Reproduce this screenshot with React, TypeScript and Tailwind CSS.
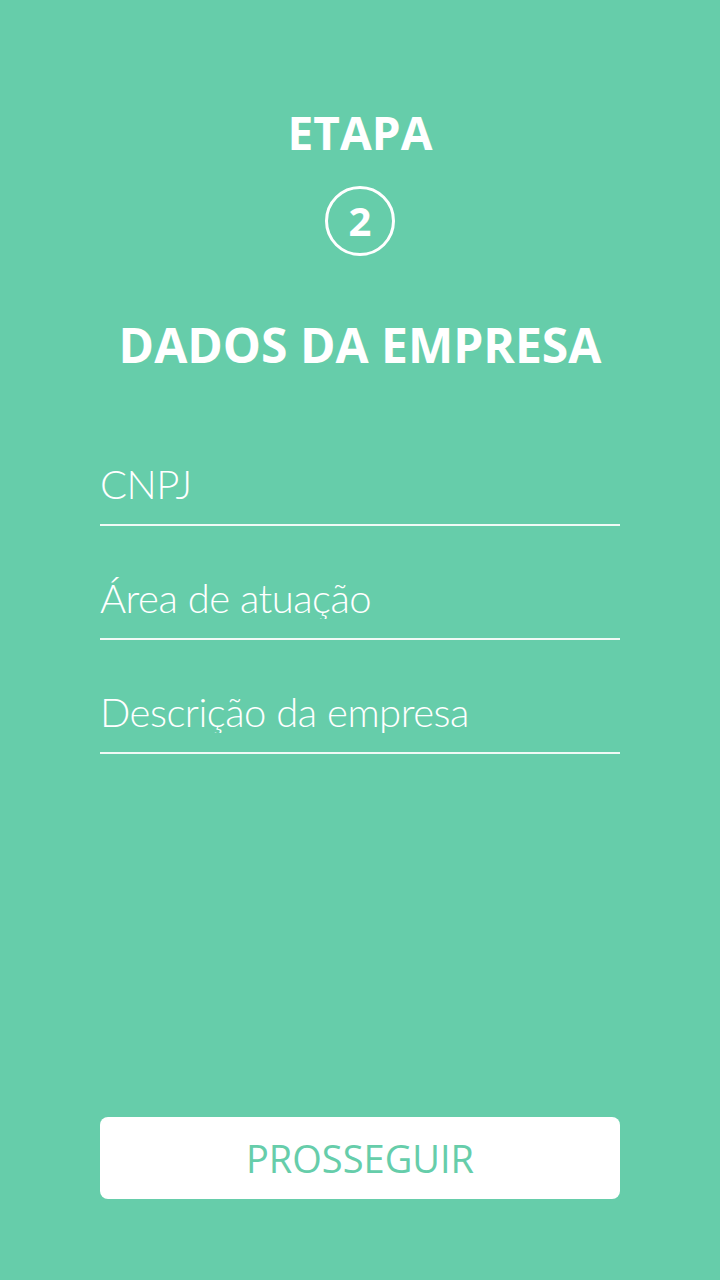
import { useState } from 'react';

const fields = [
  { name: 'cnpj', label: 'CNPJ' },
  { name: 'area', label: 'Área de atuação' },
  { name: 'descricao', label: 'Descrição da empresa' },
];

const App = () => {
  const [values, setValues] = useState<Record<string, string>>({});

  return (
    <div
      className="h-[1280px] w-full bg-[#66CDAA] flex flex-col items-center text-white"
      style={{ fontFamily: '"Open Sans", "Noto Sans", sans-serif' }}
    >
      <div className="mt-[109px] text-[46px] leading-none font-bold">ETAPA</div>

      <div className="mt-[31px] w-[70px] h-[70px] rounded-full border-[3px] border-white flex items-center justify-center">
        <span className="text-[40px] leading-none font-bold">2</span>
      </div>

      <h1 className="mt-[65px] text-[48px] leading-none font-bold">DADOS DA EMPRESA</h1>

      <div className="mt-[43px] w-[520px] flex flex-col">
        {fields.map((field) => (
          <div key={field.name} className="pt-[51px] pb-[19px] border-b-2 border-white/90">
            <input
              type="text"
              placeholder={field.label}
              value={values[field.name] ?? ''}
              onChange={(e) => setValues({ ...values, [field.name]: e.target.value })}
              className="block w-full h-[42px] p-0 bg-transparent outline-none font-['Lato',sans-serif] text-[40px] tracking-[-0.5px] leading-none font-light text-white placeholder:text-white"
            />
          </div>
        ))}
      </div>

      <button className="mt-auto mb-[81px] w-[520px] h-[82px] rounded-lg bg-white text-[#66CDAA] text-[38px] leading-none">
        PROSSEGUIR
      </button>
    </div>
  );
};

export default App;
